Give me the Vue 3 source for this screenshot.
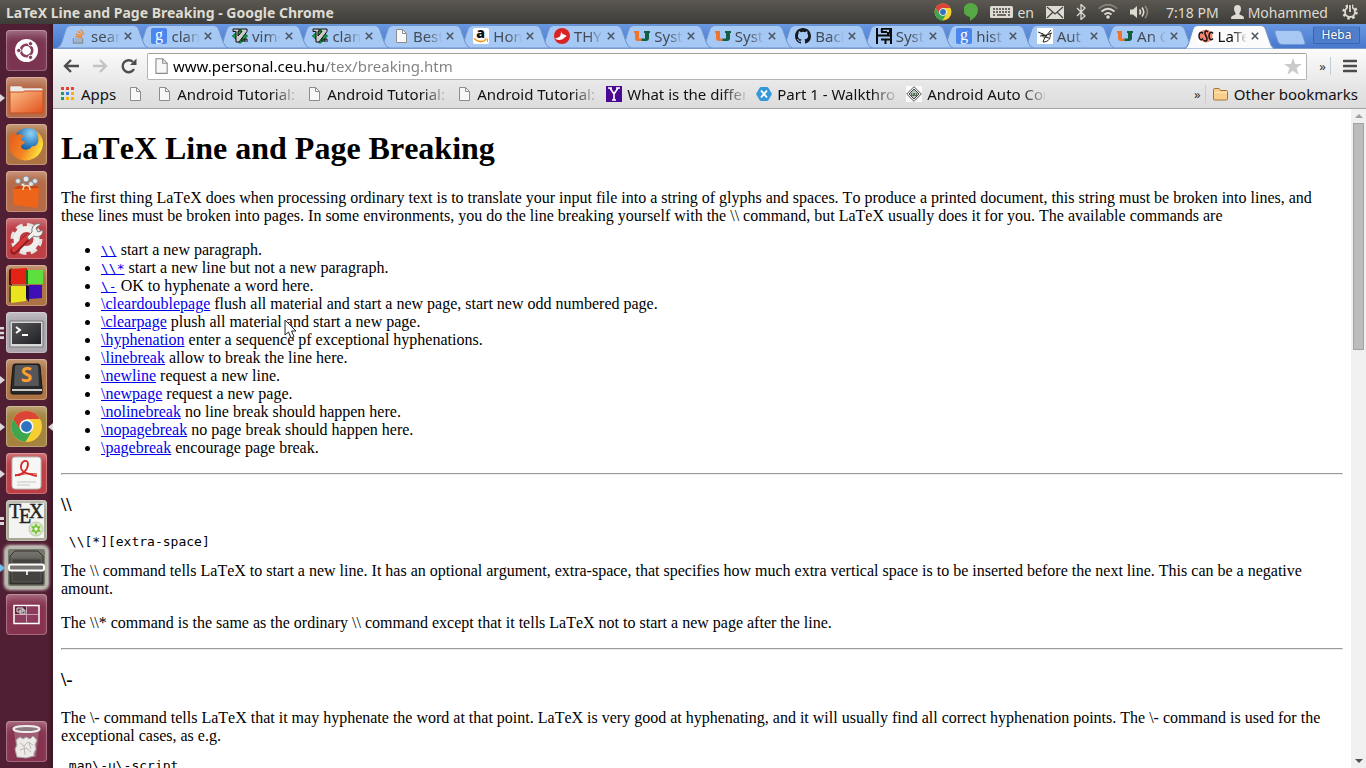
<script setup>
import { ref } from 'vue'

const tabs = [
  { icon: 'stack', title: 'sear' },
  { icon: 'google', title: 'clan' },
  { icon: 'vim', title: 'vim-' },
  { icon: 'vim', title: 'clan' },
  { icon: 'page', title: 'Best' },
  { icon: 'amazon', title: 'Hom' },
  { icon: 'bird', title: 'THY' },
  { icon: 'um', title: 'Syst' },
  { icon: 'um', title: 'Syst' },
  { icon: 'github', title: 'Back' },
  { icon: 'sft', title: 'Syst' },
  { icon: 'google', title: 'hist' },
  { icon: 'sketch', title: 'Aut' },
  { icon: 'um', title: 'An O' },
  { icon: 'csc', title: 'LaTe', active: true },
]

const bookmarks = [
  { icon: 'page', title: 'Android Tutorial:' },
  { icon: 'page', title: 'Android Tutorial:' },
  { icon: 'page', title: 'Android Tutorial:' },
  { icon: 'yahoo', title: 'What is the differ' },
  { icon: 'hex', title: 'Part 1 - Walkthrou' },
  { icon: 'diamond', title: 'Android Auto Com' },
]

const launchers = [
  { icon: 'ubuntu', name: 'Dash', tone: 'plum' },
  { icon: 'files', name: 'Files', tone: 'copper', left: 1 },
  { icon: 'firefox', name: 'Firefox', tone: 'brown' },
  { icon: 'bag', name: 'Software Center', tone: 'copper' },
  { icon: 'settings', name: 'System Settings', tone: 'red' },
  { icon: 'blocks', name: 'Code Blocks', tone: 'brown' },
  { icon: 'terminal', name: 'Terminal', tone: 'silver', left: 3 },
  { icon: 'sublime', name: 'Sublime Text', tone: 'brown', left: 1 },
  { icon: 'chrome', name: 'Google Chrome', tone: 'gold', left: 1, right: true },
  { icon: 'pdf', name: 'Document Viewer', tone: 'red', left: 1 },
  { icon: 'tex', name: 'TeX editor', tone: 'olive', left: 2 },
  { icon: 'safe', name: 'Archive', tone: 'glow', left: 1, blue: true },
  { icon: 'spaces', name: 'Workspace Switcher', tone: 'rose' },
]

const commands = [
  { cmd: '\\\\', mono: true, text: 'start a new paragraph.' },
  { cmd: '\\\\*', mono: true, text: 'start a new line but not a new paragraph.' },
  { cmd: '\\-', mono: true, text: 'OK to hyphenate a word here.' },
  { cmd: '\\cleardoublepage', text: 'flush all material and start a new page, start new odd numbered page.' },
  { cmd: '\\clearpage', text: 'plush all material and start a new page.' },
  { cmd: '\\hyphenation', text: 'enter a sequence pf exceptional hyphenations.' },
  { cmd: '\\linebreak', text: 'allow to break the line here.' },
  { cmd: '\\newline', text: 'request a new line.' },
  { cmd: '\\newpage', text: 'request a new page.' },
  { cmd: '\\nolinebreak', text: 'no line break should happen here.' },
  { cmd: '\\nopagebreak', text: 'no page break should happen here.' },
  { cmd: '\\pagebreak', text: 'encourage page break.' },
]

const address = ref('www.personal.ceu.hu/tex/breaking.htm')
</script>

<template>
  <div class="desktop">
    <svg class="sprite" aria-hidden="true">
      <defs>
        <linearGradient id="g-folder" x1="0" y1="0" x2="1" y2="1"><stop offset="0" stop-color="#fbc08a" /><stop offset="1" stop-color="#e2501b" /></linearGradient>
        <radialGradient id="g-globe" cx=".6" cy=".2" r=".8"><stop offset="0" stop-color="#8fd3f5" /><stop offset=".6" stop-color="#2572b8" /><stop offset="1" stop-color="#123a7c" /></radialGradient>
        <linearGradient id="g-fox" x1="0" y1="0" x2="1" y2=".4"><stop offset="0" stop-color="#e2571c" /><stop offset=".6" stop-color="#f38322" /><stop offset="1" stop-color="#fbdc3a" /></linearGradient>
        <linearGradient id="g-steel" x1="0" y1="0" x2="0" y2="1"><stop offset="0" stop-color="#77766f" /><stop offset="1" stop-color="#2c2b28" /></linearGradient>
        <linearGradient id="g-dark" x1="0" y1="0" x2="1" y2="1"><stop offset="0" stop-color="#55555a" /><stop offset="1" stop-color="#202024" /></linearGradient>
      </defs>
      <symbol id="stack" viewBox="0 0 16 16"><path d="M2.500 10v5h9v-5" fill="none" stroke="#8c8f93" stroke-width="1.400" /><path d="M4 13h6.500M4 11h6.500" stroke="#9aa0a4" stroke-width="1.200" /><path d="M4.300 8.500l6.500 1M5 6l6 2.500M6.800 3.300l5 4M9.800 1.300l3.300 5" stroke="#f18a33" stroke-width="1.400" /></symbol>
      <symbol id="google" viewBox="0 0 16 16"><rect width="16" height="16" rx="2" fill="#4b86ee" /><text x="8" y="11.500" text-anchor="middle" font-family="Liberation Serif, serif" font-size="16" fill="#fff">g</text></symbol>
      <symbol id="vim" viewBox="0 0 16 16"><path d="M8 .5L15.500 8 8 15.500.5 8z" fill="#1d9c42" stroke="#063" /><path d="M1 1h6v2.500h-1v4.500l4-4.500h-1V1h6v2.500L7 14H4V3.500H1z" fill="#c9cccb" stroke="#111" /><path d="M10 10v4M12 14v-3h1v3m2 0v-3h-2" fill="none" stroke="#111" /></symbol>
      <symbol id="page" viewBox="0 0 16 16"><path d="M3.500 1.500h6l4 4v9h-10z" fill="#f8f8f8" stroke="#8d8d8d" /><path d="M9.500 1.500v4h4" fill="none" stroke="#8d8d8d" /></symbol>
      <symbol id="amazon" viewBox="0 0 16 16"><rect width="16" height="16" rx="2" fill="#fff" /><text x="7.500" y="10" text-anchor="middle" font-family="Open Sans, sans-serif" font-weight="800" font-size="14" fill="#111">a</text><path d="M1 10.500c4 4 9 4 12 1" fill="none" stroke="#f79a1c" stroke-width="1.600" /><path d="M11.500 11h3v3" fill="none" stroke="#f79a1c" /></symbol>
      <symbol id="bird" viewBox="0 0 16 16"><circle cx="8" cy="8" r="8" fill="#d92423" /><path d="M1 10c5 0 6-2 6-7 1 4 3 3 4 4l2 1c-2 0-3 4-8 4-2 0-3-1-4-2z" fill="#fff" /></symbol>
      <symbol id="um" viewBox="0 0 16 16"><path d="M0 3h5v7.500h2.500V13H4q-3 0-3-3V5H0z" fill="#f0752b" /><path d="M10 3h6v2h-1v5q0 3-3 3H7.500v-2.500H11V5h-1z" fill="#115e43" /></symbol>
      <symbol id="github" viewBox="0 0 16 16"><path fill="#16191d" d="M8 0C3.580 0 0 3.580 0 8c0 3.540 2.290 6.530 5.470 7.590.4.070.55-.17.55-.38 0-.19-.01-.82-.01-1.490-2.010.37-2.530-.49-2.690-.94-.09-.23-.48-.94-.82-1.130-.28-.15-.68-.52-.01-.53.63-.01 1.080.58 1.230.82.72 1.210 1.870.87 2.330.66.07-.52.28-.87.51-1.070-1.780-.2-3.640-.89-3.640-3.950 0-.87.31-1.590.82-2.150-.08-.2-.36-1.020.08-2.120 0 0 .67-.21 2.200.82a7.600 7.600 0 014 0c1.530-1.040 2.200-.82 2.200-.82.44 1.100.16 1.920.08 2.120.51.56.82 1.270.82 2.150 0 3.070-1.870 3.750-3.650 3.950.29.25.54.73.54 1.480 0 1.070-.01 1.930-.01 2.200 0 .21.15.46.55.38A8 8 0 0016 8c0-4.420-3.580-8-8-8z" /></symbol>
      <symbol id="sft" viewBox="0 0 16 16"><path d="M1 0v16M0 7.500h16M15 0v16M5 .8h11M5.800 1v3M5 4h6M12 4v3M5 11.500h9M9.500 11v5" fill="none" stroke="#0a0a0a" stroke-width="2" /><path d="M13 2h2v4h-2z" fill="#0a0a0a" /></symbol>
      <symbol id="sketch" viewBox="0 0 16 16"><path d="M0 0h16v16H0z" fill="#fff" /><path d="M1 4l5 2 3 2 5-6M3 8l7-1 5-2M5 5c0 4 1 5 5 3M13 5c1 5-1 9-7 9l2-5 4 1" fill="none" stroke="#24251f" /></symbol>
      <symbol id="csc" viewBox="0 0 16 16"><path d="M0 0h16v16H0z" fill="#fff" /><circle cx="8" cy="8" r="6.500" fill="#f5856b" /><path d="M5 5.500C3 3 1 5 1 8s2 5 4 2.500M10 4C7 1 6 5 8 8s1 7-2.500 4M15 5.500C13 3 11 5 11 8s2 5 4 2.500" fill="none" stroke="#111" stroke-width="1.500" /></symbol>
      <symbol id="apps" viewBox="0 0 16 16"><path d="M1 1h3v3H1zM6 1h3v3H6zM11 1h3v3h-3z" fill="#ea4335" /><path d="M1 6h3v3H1zM1 11h3v3H1z" fill="#16a15c" /><path d="M6 6h3v3H6z" fill="#3b7ded" /><path d="M11 6h3v3h-3zM6 11h3v3H6zM11 11h3v3h-3z" fill="#f7b50c" /></symbol>
      <symbol id="yahoo" viewBox="0 0 16 16"><path d="M0 0h16v16H0z" fill="#4b0894" /><path d="M2 2h4M10 2h4M4 2l4 6v6M12 2L8 8M6 14h4" fill="none" stroke="#fff" stroke-width="1.600" /></symbol>
      <symbol id="hex" viewBox="0 0 16 16"><path d="M5 1h6q1 0 1.500 1L16 8l-3.500 6q-.5 1-1.500 1H5q-1 0-1.500-1L0 8l3.500-6Q4 1 5 1z" fill="#3498db" /><path d="M5 4.500l6 7M11 4.500l-6 7" stroke="#fff" stroke-width="1.900" /></symbol>
      <symbol id="diamond" viewBox="0 0 16 16"><path d="M0 0h16v16H0z" fill="#fafafa" /><path d="M8 .7L15.300 8 8 15.300.7 8z" fill="none" stroke="#555" /><path d="M8 3l5 5-5 5-5-5z" fill="#b6c9b9" stroke="#444" /><path d="M5 7h6v3H5z" fill="#57745d" /><path d="M6 8h1M9 8h1" stroke="#fff" /></symbol>
      <symbol id="folder" viewBox="0 0 16 16"><path d="M.5 13V3.500q0-1 1-1H6L7.500 4.500h6q1 0 1 1V13q0 1-1 1h-12q-1 0-1-1z" fill="#f9cf8c" stroke="#a57438" /><path d="M1.500 6.500H14" stroke="#ffe9bd" /></symbol>

      <symbol id="ubuntu" viewBox="0 0 41 41"><circle cx="20.500" cy="20.500" r="11.500" fill="#fff" /><circle cx="20.500" cy="20.500" r="5.700" fill="none" stroke="#8a3d5f" stroke-width="2.600" /><g fill="#8a3d5f" stroke="#fff"><circle cx="12.800" cy="20.500" r="2.200" /><circle cx="24.500" cy="13.700" r="2.200" /><circle cx="24.500" cy="27.300" r="2.200" /></g></symbol>
      <symbol id="files" viewBox="0 0 41 41"><path d="M4 13V10q0-1 1-1h10l2 2h18q2 0 2 2v3H4z" fill="#eceae6" stroke="#b15d3c" stroke-width=".5" /><path d="M4 15h13l2-1h18v21q0 1-1 1H5q-1 0-1-1z" fill="url(#g-folder)" stroke="#c94c1e" /></symbol>
      <symbol id="firefox" viewBox="0 0 41 41"><circle cx="22" cy="18" r="14" fill="url(#g-globe)" /><path d="M6 9c2 0 4 1 5 2 2-1 4-1 7 1-2 1-3 2-3 4l4 2c-1 3-4 2-4 4 0 5 9 5 11 0 3 1 5-1 6-4 1-4 0-8-2-11 8 5 9 15 4 22-7 10-23 10-29-1-3-6-3-12 1-19z" fill="url(#g-fox)" /></symbol>
      <symbol id="bag" viewBox="0 0 41 41"><g fill="#e1e5e9" stroke="#86939b"><circle cx="12" cy="10" r="2.500" /><circle cx="20" cy="8" r="3" /><circle cx="29" cy="10" r="2.500" /><circle cx="17" cy="14" r="2" /><circle cx="25" cy="13" r="2.500" /></g><path d="M7 18l26-1-1 20-24-3z" fill="#ee6419" /><path d="M7 18l5-3h19l2 2z" fill="#c84412" /><path d="M17 19c0-6 7-6 7 0" fill="none" stroke="#ffd39c" stroke-width="1.500" /></symbol>
      <symbol id="settings" viewBox="0 0 41 41"><circle cx="20.500" cy="21" r="12.500" fill="none" stroke="#e4e3e0" stroke-width="7" stroke-dasharray="6 3.820" /><circle cx="20.500" cy="21" r="10" fill="none" stroke="#efeeec" stroke-width="6" /><path d="M8 33l14-14" stroke="#8f1b1e" stroke-width="7" stroke-linecap="round" /><path d="M8 32l14-14" stroke="#d9393a" stroke-width="4.500" stroke-linecap="round" /><path d="M21 19l5-5c-1-5 3-10 9-8l-5 4 2 4 5-2c0 6-5 8-9 6l-5 4z" fill="#f0f0ef" stroke="#777" /></symbol>
      <symbol id="blocks" viewBox="0 0 41 41"><path d="M3 5l3-2v17H3z" fill="#5d0a08" /><path d="M5 4l16-1v16H5z" fill="#e52314" /><path d="M22 5h15v14H22z" fill="#5de03e" /><path d="M20 5h2v14h-2z" fill="#17681b" /><path d="M3 22l3-2v18l-3-1z" fill="#55550b" /><path d="M5 21h15v15l-15 2z" fill="#e9e41d" /><path d="M20 20l3 1v16l-3-4z" fill="#140643" /><path d="M23 20h13v13l-13 1z" fill="#3d0fb4" /></symbol>
      <symbol id="terminal" viewBox="0 0 41 41"><path d="M4 9h33v26H4z" fill="#d8d8d7" stroke="#77777a" /><path d="M6 11h29v21H6z" fill="url(#g-dark)" /><path d="M10 15l4 3-4 3M16 23h6" fill="none" stroke="#fff" stroke-width="2" /></symbol>
      <symbol id="sublime" viewBox="0 0 41 41"><path d="M5 29l2-22q0-2 2-2h23q2 0 2 2l2 22v5q0 1-2 1H7q-2 0-2-1z" fill="#292929" stroke="#151515" /><path d="M8 27L9 8q0-2 2-2h19q2 0 2 2l1 19z" fill="#55565a" /><path d="M6 31h30" stroke="#c9c9c9" stroke-width="2" /><text x="20.500" y="23" text-anchor="middle" font-family="Open Sans, sans-serif" font-weight="700" font-size="21" fill="#ff9d2e">S</text></symbol>
      <symbol id="chrome" viewBox="0 0 41 41"><circle cx="20.500" cy="20.500" r="15.500" fill="#f6cf31" /><path d="M7 13a15.500 15.500 0 0127 0H20.500L14 24z" fill="#db4437" /><path d="M7 13a15.500 15.500 0 0012.500 23l7-12-12.500-.5z" fill="#3fa650" /><circle cx="20.500" cy="20.500" r="7" fill="#f7f7f7" /><circle cx="20.500" cy="20.500" r="5.400" fill="#2d73bf" /></symbol>
      <symbol id="pdf" viewBox="0 0 41 41"><rect x="6" y="4" width="29" height="32" rx="3" fill="#f6f6f5" stroke="#b9bab9" /><path d="M11 29h19M11 32h13" stroke="#c5c5c5" /><path d="M9 22c8 1 13-6 13-11 0-5-6-4-7 2-1 7 8 8 16 10" fill="none" stroke="#d5272a" stroke-width="1.800" /><path d="M9 23c8-2 12-3 22-2" fill="none" stroke="#d5272a" /></symbol>
      <symbol id="tex" viewBox="0 0 41 41"><path d="M3 3h35v35H3z" fill="#f3f3f1" /><g font-family="Liberation Serif, serif" fill="#222" stroke="#222" stroke-width=".4"><text x="3" y="18" font-size="20">T</text><text x="13" y="23" font-size="20">E</text><text x="23" y="18" font-size="20">X</text></g><circle cx="30" cy="29" r="7" fill="#d9e6c7" stroke="#bdc8ac" /><path d="M30 23l1.500 3.500 3.500-.5-2 3 2 3-3.500-.5L30 35l-1.500-3.500-3.500.5 2-3-2-3 3.500.5z" fill="#6ec22a" /><circle cx="30" cy="29" r="1.700" fill="#fff" /></symbol>
      <symbol id="safe" viewBox="0 0 41 41"><path d="M4 9l5-5h23l5 5v28H4z" fill="url(#g-steel)" stroke="#333" /><path d="M6 12h29v23H6z" fill="#444340" stroke="#5c5b56" /><path d="M21 21v7" stroke="#d8d8d8" stroke-width="2" /><rect x="3" y="17.500" width="35" height="6" rx="2" fill="#77736f" stroke="#fff" stroke-width="2" /></symbol>
      <symbol id="spaces" viewBox="0 0 41 41"><path d="M8 11.500h25v18H8z" fill="#8d3c5d" stroke="#fff" stroke-width="1.500" /><path d="M9 12.500h11v8H9z" fill="#5c1f38" /><path d="M20.500 12v17M9 20.500h23" stroke="#c6a3b2" /><path d="M11 14h6v4h-6zM14 16h5v4h-5z" fill="#6a4250" stroke="#ddd" /></symbol>
      <symbol id="trash" viewBox="0 0 41 41"><path d="M8 9l3 27h19l3-27z" fill="#b78a9b" fill-opacity=".5" /><path d="M10 19l4-3 3 2 3-2 4 2 3-3 4 4-2 5 1 4-2 4 0 3-8 2-9-1-1-4-1-4 2-4z" fill="#eceae7" stroke="#aaa5a3" /><path d="M14 22l4 3 4-4 5 3M14 29l6-2 5 4M18 25l1 9M23 21l2 7" fill="none" stroke="#bcb7b3" /><ellipse cx="20.500" cy="8" rx="13" ry="3" fill="#8e7a81" stroke="#eee" stroke-width="2" /></symbol>
    </svg>

    <header class="panel">
      <span class="window-title">LaTeX Line and Page Breaking - Google Chrome</span>
      <div class="indicators">
        <svg class="i-chrome" viewBox="4 4 33 33"><use href="#chrome" width="41" height="41" /></svg>
        <svg class="i-leaf" viewBox="0 0 14 18"><path d="M7 0a7 7 0 017 7q0 6-8 11v-4a7 7 0 011-14z" fill="#55a844" /></svg>
        <span class="lang"><svg width="23" height="14" viewBox="0 0 23 14"><rect y="1" width="23" height="12" rx="1.500" fill="#dfdbd2" /><path d="M3 4h17M3 7h17" stroke="#45443f" stroke-width="1.500" stroke-dasharray="2 1" /><path d="M3 10h2M7 10h9M18 10h2" stroke="#45443f" stroke-width="1.500" /></svg>en</span>
        <svg class="i-mail" viewBox="0 0 18 13"><path d="M0 0h18v13H0z" fill="#dfdbd2" /><path d="M1 1l8 7 8-7M1 12l6-6M17 12l-6-6" fill="none" stroke="#45443f" stroke-width="1.200" /></svg>
        <svg class="i-bt" viewBox="0 0 10 16"><path d="M1 4l8 8-4 3.500V.5L9 4l-8 8" fill="none" stroke="#dfdbd2" stroke-width="1.300" /></svg>
        <svg class="i-wifi" viewBox="0 0 20 16"><circle cx="10" cy="13" r="1.800" fill="#dfdbd2" /><path d="M6.500 10.500q3.500-3 7 0M3.500 7.500q6.500-5.500 13 0" fill="none" stroke="#dfdbd2" stroke-width="1.800" /><path d="M.8 4.600q9.200-8 18.400 0" fill="none" stroke="#8b8880" stroke-width="1.600" /></svg>
        <svg class="i-vol" viewBox="0 0 19 14"><path d="M0 4.500h3L7 1v12L3 9.500H0z" fill="#dfdbd2" /><path d="M9.500 4.500q2 2.500 0 5M12 2.500q3.500 4.500 0 9" fill="none" stroke="#dfdbd2" stroke-width="1.600" /><path d="M15 .8q5 6.200 0 12.400" fill="none" stroke="#8b8880" stroke-width="1.500" /></svg>
        <time class="clock">7:18 PM</time>
        <span class="user"><svg width="13" height="14" viewBox="0 0 13 14"><path d="M6.500 0q3.500 0 3.500 4 0 2.500-1.500 4v1.500L12 11q1 .5 1 3H0q0-2.500 1-3l3.500-1.500V8Q3 6.500 3 4q0-4 3.500-4z" fill="#dfdbd2" /></svg>Mohammed</span>
        <svg class="i-gear" viewBox="0 0 16 16"><circle cx="8" cy="8" r="6.500" fill="none" stroke="#dfdbd2" stroke-width="2.400" stroke-dasharray="2.500 2.600" /><circle cx="8" cy="8" r="5" fill="none" stroke="#dfdbd2" stroke-width="1.800" /><path d="M8 0v8" stroke="#45443f" stroke-width="4" /><path d="M8 1v7" stroke="#dfdbd2" stroke-width="1.800" /></svg>
      </div>
    </header>

    <div class="workspace">
      <nav class="launcher" aria-label="Launcher">
        <button v-for="l in launchers" :key="l.name" class="tile" :class="l.tone" :aria-label="l.name">
          <svg width="41" height="41"><use :href="'#' + l.icon" /></svg>
          <svg v-if="l.left" class="pip" :class="{ blue: l.blue }" viewBox="0 0 5 12">
            <path v-if="l.left === 1" d="M0 2l5 4-5 4z" />
            <path v-else-if="l.left === 2" d="M0 2h4v3H0zM0 7h4v3H0z" />
            <path v-else d="M0 0h4v2.500H0zM0 4.700h4v2.500H0zM0 9.300h4V12H0z" />
          </svg>
          <svg v-if="l.right" class="pip end" viewBox="0 0 5 12"><path d="M5 2L0 6l5 4z" /></svg>
        </button>
        <button class="tile rose last" aria-label="Trash"><svg width="41" height="41"><use href="#trash" /></svg></button>
      </nav>

      <div class="browser">
        <div class="tabstrip">
          <div class="tabs">
            <div v-for="(t, i) in tabs" :key="i" class="tab" :class="{ active: t.active }" :style="{ zIndex: t.active ? 30 : 20 - i }">
              <svg class="tab-shape" viewBox="0 0 92 24" preserveAspectRatio="none"><path d="M0 24Q3 23 4.500 19L9 5Q10.500 1.500 14 1.500H77Q80.500 1.500 82 5L87 19Q88.500 23 92 24z" /></svg>
              <svg class="favicon" width="16" height="16"><use :href="'#' + t.icon" /></svg>
              <button class="tab-title">{{ t.title }}</button>
              <button class="tab-close" aria-label="Close tab"><svg width="8" height="8" viewBox="0 0 8 8"><path d="M.8.8l6.400 6.400M7.200.8L.8 7.200" stroke="#4c5663" stroke-width="1.600" /></svg></button>
            </div>
          </div>
          <div class="strip-end">
            <button class="new-tab" aria-label="New tab"><svg width="32" height="15" viewBox="0 0 32 15"><path d="M2 .5h22q3 0 4 3l3 9q.5 2-2 2H8q-3 0-4-3L1 3Q.5.500 2 .5z" fill="#a6c8f3" stroke="#6e98d8" /></svg></button>
            <button class="profile">Heba</button>
          </div>
        </div>

        <div class="toolbar">
          <button class="tool" aria-label="Back"><svg width="16" height="16" viewBox="0 0 16 16"><path d="M16 8H3M8 2L2 8l6 6" fill="none" stroke="#4d4d4d" stroke-width="2.400" /></svg></button>
          <button class="tool" aria-label="Forward"><svg width="16" height="16" viewBox="0 0 16 16"><path d="M1 8h12M8 2l6 6-6 6" fill="none" stroke="#c4c4c4" stroke-width="2.400" /></svg></button>
          <button class="tool" aria-label="Reload"><svg width="16" height="16" viewBox="0 0 16 16"><path d="M13 11A6 6 0 1112 4" fill="none" stroke="#4d4d4d" stroke-width="2.400" /><path d="M15.500.5V7H9z" fill="#4d4d4d" /></svg></button>
          <div class="omnibox">
            <svg width="18" height="18"><use href="#page" /></svg>
            <input v-model="address" aria-label="Address" spellcheck="false" />
            <button class="star" aria-label="Bookmark this page"><svg width="18" height="17" viewBox="0 0 18 17"><path d="M9 0l2.200 6H18l-5.400 4 2 6.700L9 12.700l-5.600 4 2-6.700L0 6h6.800z" fill="#cbcbcb" /></svg></button>
          </div>
          <button class="more" aria-label="More extensions">»</button>
          <button class="menu" aria-label="Menu"><svg width="14" height="14" viewBox="0 0 14 14"><path d="M1 2h12M1 7h12M1 12h12" stroke="#4b4b4b" stroke-width="2.600" stroke-linecap="round" /></svg></button>
        </div>

        <div class="bookmarks">
          <a href="#apps" class="mark apps"><svg width="16" height="16"><use href="#apps" /></svg><span>Apps</span></a>
          <a href="#blank" class="mark blank" aria-label="Untitled bookmark"><svg width="16" height="16"><use href="#page" /></svg></a>
          <a v-for="(b, i) in bookmarks" :key="i" href="#bookmark" class="mark item"><svg width="16" height="16"><use :href="'#' + b.icon" /></svg><span>{{ b.title }}</span></a>
          <button class="more overflow" aria-label="More bookmarks">»</button>
          <a href="#other" class="mark other"><svg width="16" height="16"><use href="#folder" /></svg><span>Other bookmarks</span></a>
        </div>

        <div class="viewport">
          <main class="document">
            <h1>LaTeX Line and Page Breaking</h1>
            <p>The first thing LaTeX does when processing ordinary text is to translate your input file into a string of glyphs and spaces. To produce a printed document, this string must be broken into lines, and these lines must be broken into pages. In some environments, you do the line breaking yourself with the \\ command, but LaTeX usually does it for you. The available commands are</p>
            <ul>
              <li v-for="c in commands" :key="c.cmd"><a href="#cmd" :class="{ mono: c.mono }">{{ c.cmd }}</a> {{ c.text }}</li>
            </ul>
            <hr />
            <h3>\\</h3>
            <pre> \\[*][extra-space]</pre>
            <div>The \\ command tells LaTeX to start a new line. It has an optional argument, extra-space, that specifies how much extra vertical space is to be inserted before the next line. This can be a negative amount.</div>
            <p>The \\* command is the same as the ordinary \\ command except that it tells LaTeX not to start a new page after the line.</p>
            <hr />
            <h3>\-</h3>
            <div>The \- command tells LaTeX that it may hyphenate the word at that point. LaTeX is very good at hyphenating, and it will usually find all correct hyphenation points. The \- command is used for the exceptional cases, as e.g.</div>
            <pre> man\-u\-script</pre>
          </main>
          <div class="scrollbar" aria-hidden="true">
            <svg width="8" height="14" viewBox="0 0 8 14"><path d="M4 5l4 4H0z" fill="#9f9f9f" /></svg>
            <div class="track"><div class="thumb"></div></div>
            <svg width="8" height="14" viewBox="0 0 8 14"><path d="M0 5h8L4 9z" fill="#505050" /></svg>
          </div>
        </div>
      </div>
    </div>

    <svg class="pointer" width="14" height="21" viewBox="0 0 14 21"><path d="M1 1v15l3.500-3 2.500 6 3-1.200L7.500 12H12z" fill="#fff" stroke="#222" /></svg>
  </div>
</template>

<style>
body {
  margin: 0;
  overflow: hidden;
}
</style>

<style scoped>
.desktop {
  position: relative;
  display: flex;
  flex-direction: column;
  height: 100vh;
  overflow: hidden;
  font-family: "Noto Sans", "Open Sans", sans-serif;
  color: #000;
}
.sprite {
  position: absolute;
  width: 0;
  height: 0;
}
svg {
  display: block;
  flex: none;
}
button {
  margin: 0;
  padding: 0;
  border: 0;
  background: none;
  font: inherit;
  color: inherit;
}

.panel {
  display: flex;
  flex: none;
  align-items: center;
  justify-content: space-between;
  height: 24px;
  padding: 0 8px 0 6px;
  background: linear-gradient(#5a5850, #3d3c38);
  color: #dfdbd2;
  font-size: 14px;
  white-space: nowrap;
}
.window-title {
  font-weight: 700;
}
.indicators {
  display: flex;
  align-items: center;
  gap: 12px;
}
.i-chrome { width: 18px; height: 18px; }
.i-leaf { width: 14px; height: 18px; }
.i-mail { width: 18px; height: 13px; }
.i-bt { width: 10px; height: 16px; }
.i-wifi { width: 20px; height: 16px; }
.i-vol { width: 19px; height: 14px; margin-right: 5px; }
.i-gear { width: 16px; height: 16px; margin-left: 2px; }
.lang,
.user {
  display: flex;
  align-items: center;
  gap: 4px;
}

.workspace {
  display: flex;
  flex: 1;
  min-height: 0;
}
.launcher {
  display: flex;
  flex: none;
  flex-direction: column;
  gap: 6px;
  box-sizing: border-box;
  width: 53px;
  padding: 6px;
  background: linear-gradient(90deg, #511f33 90%, #3d1525);
}
.tile {
  position: relative;
  flex: none;
  width: 41px;
  height: 41px;
  border-radius: 4px;
  box-shadow: inset 0 0 0 1px rgba(255, 255, 255, 0.25), inset 0 8px 8px -4px rgba(255, 255, 255, 0.35);
}
.tile.last { margin-top: auto; }
.plum { background: #7b3553; }
.copper { background: #b56a48; }
.brown { background: #ae7344; }
.red { background: #bd3e45; }
.silver { background: #aba5ad; }
.gold { background: #a5823f; }
.olive { background: #a9a795; }
.rose { background: #86334f; }
.glow {
  background: #77776c;
  box-shadow: 0 0 3px 2px #d5d2cb, inset 0 0 0 2px #b9b8ad;
}
.pip {
  position: absolute;
  left: -6px;
  top: 15px;
  width: 5px;
  height: 12px;
  fill: #dcd8da;
}
.pip.blue { fill: #6cc0ee; }
.pip.end {
  left: auto;
  right: -6px;
}

.browser {
  display: flex;
  flex: 1;
  flex-direction: column;
  min-width: 0;
}
.tabstrip {
  display: flex;
  flex: none;
  height: 24px;
  padding-left: 4px;
  background: linear-gradient(#6898e2, #4878cc);
  border-bottom: 1px solid #7c9bcb;
}
.tabs {
  display: flex;
  flex: 1;
  min-width: 0;
}
.tab {
  position: relative;
  display: flex;
  flex: 1 1 0;
  align-items: center;
  box-sizing: border-box;
  min-width: 0;
  padding-left: 14px;
  color: #444b55;
}
.tab-shape {
  position: absolute;
  left: 0;
  top: 0;
  width: calc(100% + 11px);
  height: 24px;
  fill: #a5c8f5;
  stroke: #6d93cb;
}
.tab.active .tab-shape {
  height: 25px;
  fill: #fbfbfb;
}
.tab.active { color: #111; }
.favicon,
.tab-title,
.tab-close {
  position: relative;
}
.tab-title {
  flex: none;
  width: 29px;
  margin-left: 4px;
  overflow: hidden;
  font-size: 15px;
  line-height: 20px;
  text-align: left;
  white-space: nowrap;
  -webkit-mask-image: linear-gradient(90deg, #000 50%, transparent);
  mask-image: linear-gradient(90deg, #000 50%, transparent);
}
.tab-close { margin-left: 4px; }
.strip-end {
  display: flex;
  flex: none;
  gap: 7px;
  width: 92px;
  padding: 2px 0 0 10px;
}
.new-tab {
  align-self: flex-start;
  padding-top: 4px;
}
.profile {
  align-self: flex-start;
  width: 47px;
  height: 18px;
  border: 1px solid #3c64ad;
  border-top-color: #5482d2;
  border-radius: 2px;
  background: #4f7ecd;
  color: #fff;
  font-size: 12px;
  line-height: 16px;
  text-shadow: 0 0 2px #1b3460;
}

.toolbar {
  display: flex;
  flex: none;
  align-items: center;
  box-sizing: border-box;
  height: 33px;
  padding: 1px 9px 0 10px;
  background: linear-gradient(#fbfbfb, #e9e9e9);
}
.tool { margin-right: 13px; }
.omnibox {
  display: flex;
  flex: 1;
  align-items: center;
  box-sizing: border-box;
  height: 27px;
  margin-left: -3px;
  padding: 0 4px;
  border: 1px solid #b4b4b4;
  border-top-color: #a0a0a0;
  border-radius: 2px;
  background: #fff;
}
.omnibox input {
  flex: 1;
  min-width: 0;
  height: 24px;
  margin-left: 3px;
  padding: 0;
  border: 0;
  outline: 0;
  background: linear-gradient(90deg, #000 151px, #808080 151px);
  -webkit-background-clip: text;
  background-clip: text;
  color: transparent;
  font-family: inherit;
  font-size: 15px;
}
.more {
  width: 16px;
  margin-left: 8px;
  border-right: 1px solid #c3cdd4;
  color: #333;
  font-size: 13px;
  line-height: 18px;
}
.menu { margin-left: 12px; }

.bookmarks {
  display: flex;
  flex: none;
  align-items: center;
  gap: 11px;
  box-sizing: border-box;
  height: 27px;
  padding: 0 8px 3px 7px;
  border-bottom: 1px solid #a5a5a5;
  background: linear-gradient(#e8e8e8, #dcdcdc);
  font-size: 15px;
}
.mark {
  display: flex;
  flex: none;
  align-items: center;
  gap: 5px;
  color: #111;
  line-height: 22px;
  text-decoration: none;
  white-space: nowrap;
}
.mark.blank { margin-right: 2px; }
.mark.item span {
  width: 118px;
  overflow: hidden;
  -webkit-mask-image: linear-gradient(90deg, #000 80%, rgba(0, 0, 0, 0.15));
  mask-image: linear-gradient(90deg, #000 80%, rgba(0, 0, 0, 0.15));
}
.overflow {
  margin-left: auto;
  margin-right: -4px;
}

.viewport {
  display: flex;
  flex: 1;
  min-height: 0;
  background: #fff;
}
.document {
  flex: 1;
  min-width: 0;
  padding: 21px 8px 0;
  overflow: hidden;
  font-family: "Liberation Serif", "Times New Roman", serif;
  font-size: 16px;
  font-kerning: none;
  line-height: 18px;
}
h1 {
  margin: 0 0 22px;
  font-size: 32px;
  line-height: 37px;
}
.document p { margin: 16px 0; }
.document ul {
  margin: 16px 0;
  padding-left: 40px;
}
.document a { color: #0000ee; }
.document a.mono,
.document pre {
  font-family: "DejaVu Sans Mono", monospace;
  font-size: 13px;
}
.document a.mono { line-height: 12px; }
.document pre {
  margin: 13px 0;
  line-height: 15px;
}
.document hr {
  margin: 16px 0 0;
  border: 1px solid #9a9a9a;
  border-right-color: #eee;
  border-bottom-color: #eee;
}
h3 {
  margin: 19px 0;
  font-size: 19px;
  line-height: 21px;
}

.scrollbar {
  display: flex;
  flex: none;
  flex-direction: column;
  align-items: center;
  width: 15px;
  background: #f0f0f0;
}
.track {
  flex: 1;
  width: 11px;
}
.thumb {
  box-sizing: border-box;
  height: 36%;
  border: 1px solid #a3a3a3;
  background: #bcbcbc;
}
.pointer {
  position: absolute;
  left: 284px;
  top: 319px;
}
</style>
